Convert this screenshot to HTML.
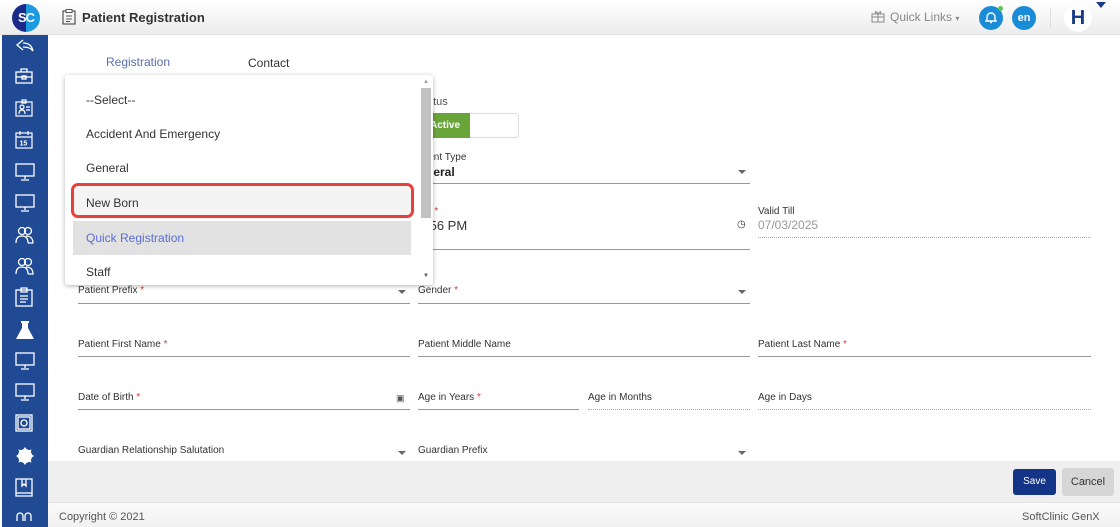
<!DOCTYPE html>
<html><head><meta charset="utf-8"><style>
*{margin:0;padding:0;box-sizing:border-box}
body{width:1120px;height:527px;overflow:hidden;font-family:"Liberation Sans",sans-serif;background:#fff;position:relative;color:#333}
.abs{position:absolute}
.hdr{left:0;top:0;width:1120px;height:35px;background:linear-gradient(#fff,#ececec);border-bottom:1px solid #e2e2e2}
.side{left:2px;top:35px;width:46px;height:492px;background:#214a94}
.side svg{position:absolute;left:13px}
.lbl{font-size:10px;color:#333}
.req{color:#e53935}
.ul{height:1px;background:#999}
.dot{height:0;border-top:1px dotted #aaa}
.dd{left:65px;top:75px;width:368px;height:210px;background:#fff;box-shadow:0 1px 5px rgba(0,0,0,.3);border-radius:3px}
.it{position:absolute;left:21px;font-size:12px;color:#333}
.caret{width:0;height:0;border-left:4px solid transparent;border-right:4px solid transparent;border-top:4px solid #666}
</style></head><body>
<div class="abs hdr"></div>
<div class="abs" style="left:12px;top:4px;width:28px;height:28px;border-radius:50%;background:linear-gradient(90deg,#1a2a8a 50%,#1e9be0 50%);color:#fff;font-weight:bold;font-size:13px;line-height:28px;text-align:center;letter-spacing:-1px">SC</div>
<svg class="abs" style="left:62px;top:9px" width="14" height="16" viewBox="0 0 14 16"><rect x="1" y="2" width="12" height="13" fill="none" stroke="#555" stroke-width="1.2"/><rect x="4" y="0.5" width="6" height="3" fill="#fff" stroke="#555"/><path d="M4 7h6M4 10h6M4 12.5h4" stroke="#555"/></svg>
<div class="abs" style="left:82px;top:10px;font-size:13px;font-weight:bold;color:#333">Patient Registration</div>
<svg class="abs" style="left:871px;top:10px" width="14" height="13" viewBox="0 0 14 13"><rect x="1" y="4" width="12" height="8" fill="none" stroke="#888"/><path d="M1 7h12M7 4v8M7 4C5 0 3 2 5 4M7 4c2-4 4-2 2 0" fill="none" stroke="#888"/></svg>
<div class="abs" style="left:890px;top:10px;font-size:12px;color:#888">Quick Links <span style="font-size:8px">▾</span></div>
<div class="abs" style="left:979px;top:6px;width:24px;height:24px;border-radius:50%;background:#1a8bd6"></div>
<div class="abs" style="left:998px;top:6px;width:5px;height:5px;border-radius:50%;background:#5bc45b"></div>
<svg class="abs" style="left:985px;top:11px" width="12" height="13" viewBox="0 0 12 13"><path d="M2 9V6a4 4 0 0 1 8 0v3l1 1H1z" fill="none" stroke="#fff" stroke-width="1.4"/><path d="M5 11.5h2" stroke="#fff" stroke-width="1.4"/></svg>
<div class="abs" style="left:1012px;top:6px;width:24px;height:24px;border-radius:50%;background:#1a8bd6;color:#fff;font-size:11px;font-weight:bold;line-height:24px;text-align:center">en</div>
<div class="abs" style="left:1050px;top:8px;width:1px;height:20px;background:#ddd"></div>
<div class="abs" style="left:1064px;top:4px;width:28px;height:28px;border-radius:50%;background:#fff;color:#1a3a8a;font-size:20px;font-weight:bold;line-height:28px;text-align:center">H</div>
<div class="abs" style="left:1096px;top:2px;border-left:5px solid transparent;border-right:5px solid transparent;border-top:6px solid #1a3a8a"></div>

<div class="abs side">
<svg style="top:4px" width="20" height="14" viewBox="0 0 20 14" fill="none" stroke="#fff" stroke-width="1.3"><path d="M8 1L2 6l6 5M8 4c6 0 9 3 10 8C16 9 13 8 8 8"/></svg>
<svg style="top:33px" width="18" height="16" viewBox="0 0 18 16" fill="none" stroke="#fff" stroke-width="1.3"><rect x="1" y="4" width="16" height="11"/><path d="M6 4V1h6v3M1 9h16"/><rect x="7" y="8" width="4" height="3"/></svg>
<svg style="top:64px" width="18" height="18" viewBox="0 0 18 18" fill="none" stroke="#fff" stroke-width="1.2"><rect x="1" y="3" width="16" height="14"/><path d="M7 1h4v3H7zM4 15c0-3 1-4 3-4s3 1 3 4M11 8h4M11 11h4"/><circle cx="7" cy="8" r="2"/></svg>
<svg style="top:96px" width="18" height="18" viewBox="0 0 18 18" fill="none" stroke="#fff" stroke-width="1.2"><rect x="1" y="2" width="16" height="15"/><path d="M1 6h16M5 0v4M13 0v4"/><text x="4.5" y="14.5" font-size="7" fill="#fff" stroke="none" font-family="Liberation Sans" font-weight="bold">15</text></svg>
<svg style="top:128px" width="20" height="18" viewBox="0 0 20 18" fill="none" stroke="#fff" stroke-width="1.3"><rect x="1" y="1" width="18" height="12"/><path d="M10 13v3M6 17h8"/></svg>
<svg style="top:159px" width="20" height="18" viewBox="0 0 20 18" fill="none" stroke="#fff" stroke-width="1.3"><rect x="1" y="1" width="18" height="12"/><path d="M10 13v3M6 17h8"/></svg>
<svg style="top:191px" width="20" height="18" viewBox="0 0 20 18" fill="none" stroke="#fff" stroke-width="1.3"><circle cx="7" cy="5" r="3.5"/><circle cx="13" cy="5" r="3.5"/><path d="M1 17c0-5 2-7 6-7s6 2 6 7M11 10c4 0 7 2 7 7H13"/></svg>
<svg style="top:222px" width="20" height="18" viewBox="0 0 20 18" fill="none" stroke="#fff" stroke-width="1.3"><circle cx="7" cy="5" r="3.5"/><circle cx="13" cy="5" r="3.5"/><path d="M1 17c0-5 2-7 6-7s6 2 6 7M11 10c4 0 7 2 7 7H13"/></svg>
<svg style="top:252px" width="18" height="20" viewBox="0 0 18 20" fill="none" stroke="#fff" stroke-width="1.3"><rect x="1" y="3" width="16" height="16"/><path d="M6 1h6v4H6zM5 9h8M5 12h8M5 15h6"/></svg>
<svg style="top:285px" width="20" height="20" viewBox="0 0 20 20"><path d="M6 1h8v2h-1v5l6 11H1L7 8V3H6z" fill="#fff"/></svg>
<svg style="top:317px" width="20" height="18" viewBox="0 0 20 18" fill="none" stroke="#fff" stroke-width="1.3"><rect x="1" y="1" width="18" height="12"/><path d="M10 13v3M6 17h8"/></svg>
<svg style="top:348px" width="20" height="18" viewBox="0 0 20 18" fill="none" stroke="#fff" stroke-width="1.3"><rect x="1" y="1" width="18" height="12"/><path d="M10 13v3M6 17h8"/></svg>
<svg style="top:379px" width="18" height="18" viewBox="0 0 18 18" fill="none" stroke="#fff" stroke-width="1.3"><rect x="1" y="1" width="16" height="16"/><rect x="3" y="3" width="12" height="12"/><circle cx="9" cy="9" r="3"/></svg>
<svg style="top:411px" width="20" height="20" viewBox="0 0 20 20"><circle cx="10" cy="10" r="7" fill="#fff"/><path d="M10 1l2 3h-4zM10 19l2-3h-4zM1 10l3 2v-4zM19 10l-3 2v-4zM3.5 3.5l3.5 1-2.5 2.5zM16.5 16.5l-3.5-1 2.5-2.5zM16.5 3.5l-1 3.5-2.5-2.5zM3.5 16.5l1-3.5 2.5 2.5z" fill="#fff"/></svg>
<svg style="top:443px" width="18" height="20" viewBox="0 0 18 20" fill="none" stroke="#fff" stroke-width="1.3"><rect x="1" y="1" width="16" height="14"/><path d="M1 15v3h16v-3M7 1v7l2-2 2 2V1"/></svg>
<svg style="top:475px" width="18" height="12" viewBox="0 0 18 12" fill="none" stroke="#fff" stroke-width="1.3"><path d="M2 11V6a3 3 0 0 1 6 0v5M10 11V6a3 3 0 0 1 6 0v5"/></svg>
</div>

<div class="abs" style="left:106px;top:55px;font-size:12px;color:#5a6fb0">Registration</div>
<div class="abs" style="left:248px;top:56px;font-size:12px;color:#333">Contact</div>

<div class="abs" style="left:427px;top:96px;font-size:11px;color:#555">atus</div>
<div class="abs" style="left:418px;top:113px;width:101px;height:25px;border:1px solid #ddd;border-radius:3px;background:#fff"></div>
<div class="abs" style="left:418px;top:113px;width:52px;height:25px;background:#6aa53a;color:#fff;font-size:10px;font-weight:bold;line-height:25px;text-align:right;padding-right:10px">Active</div>
<div class="abs lbl" style="left:426px;top:152px">ient Type</div>
<div class="abs" style="left:426px;top:165px;font-size:12px;font-weight:bold;color:#222">neral</div>
<div class="abs caret" style="left:738px;top:170px"></div>
<div class="abs ul" style="left:418px;top:183px;width:332px"></div>
<div class="abs lbl" style="left:426px;top:206px">e <span class="req">*</span></div>
<div class="abs" style="left:426px;top:218px;font-size:13px;color:#333">:56 PM</div>
<div class="abs" style="left:737px;top:219px;font-size:10px;color:#333">◷</div>
<div class="abs ul" style="left:418px;top:249px;width:332px"></div>
<div class="abs lbl" style="left:758px;top:206px">Valid Till</div>
<div class="abs" style="left:758px;top:218px;font-size:12px;color:#999">07/03/2025</div>
<div class="abs dot" style="left:758px;top:237px;width:333px"></div>

<div class="abs lbl" style="left:78px;top:285px">Patient Prefix <span class="req">*</span></div>
<div class="abs caret" style="left:398px;top:290px"></div>
<div class="abs ul" style="left:78px;top:303px;width:332px"></div>
<div class="abs lbl" style="left:418px;top:285px">Gender <span class="req">*</span></div>
<div class="abs caret" style="left:738px;top:290px"></div>
<div class="abs ul" style="left:418px;top:303px;width:332px"></div>

<div class="abs lbl" style="left:78px;top:339px">Patient First Name <span class="req">*</span></div>
<div class="abs ul" style="left:78px;top:356px;width:332px"></div>
<div class="abs lbl" style="left:418px;top:339px">Patient Middle Name</div>
<div class="abs ul" style="left:418px;top:356px;width:332px"></div>
<div class="abs lbl" style="left:758px;top:339px">Patient Last Name <span class="req">*</span></div>
<div class="abs ul" style="left:758px;top:356px;width:333px"></div>

<div class="abs lbl" style="left:78px;top:392px">Date of Birth <span class="req">*</span></div>
<div class="abs" style="left:396px;top:393px;font-size:9px;color:#555">▣</div>
<div class="abs ul" style="left:78px;top:409px;width:332px"></div>
<div class="abs lbl" style="left:418px;top:392px">Age in Years <span class="req">*</span></div>
<div class="abs ul" style="left:418px;top:409px;width:161px"></div>
<div class="abs lbl" style="left:588px;top:392px">Age in Months</div>
<div class="abs dot" style="left:588px;top:409px;width:162px"></div>
<div class="abs lbl" style="left:758px;top:392px">Age in Days</div>
<div class="abs dot" style="left:758px;top:409px;width:333px"></div>

<div class="abs lbl" style="left:78px;top:445px">Guardian Relationship Salutation</div>
<div class="abs caret" style="left:398px;top:451px"></div>
<div class="abs lbl" style="left:418px;top:445px">Guardian Prefix</div>
<div class="abs caret" style="left:738px;top:451px"></div>

<div class="abs" style="left:48px;top:461px;width:1072px;height:41px;background:#efefef"></div>
<div class="abs" style="left:1013px;top:469px;width:43px;height:26px;background:#143488;border-radius:3px;color:#fff;font-size:10px;line-height:26px;text-align:center">Save</div>
<div class="abs" style="left:1062px;top:468px;width:52px;height:28px;background:#d6d6d6;border-radius:3px;color:#333;font-size:11px;line-height:28px;text-align:center">Cancel</div>
<div class="abs" style="left:48px;top:502px;width:1072px;height:25px;background:linear-gradient(#fafafa,#f1f1f1);border-top:1px solid #e4e4e4"></div>
<div class="abs" style="left:59px;top:511px;font-size:11px;color:#555">Copyright © 2021</div>
<div class="abs" style="left:1022px;top:511px;font-size:11px;color:#555">SoftClinic GenX</div>

<div class="abs dd">
<div class="it" style="top:18px">--Select--</div>
<div class="it" style="top:52px">Accident And Emergency</div>
<div class="it" style="top:86px">General</div>
<div class="abs" style="left:8px;top:146px;width:338px;height:34px;background:#e2e2e2"></div>
<div class="abs" style="left:8px;top:110px;width:338px;height:34px;background:#f4f4f4"></div>
<div class="abs" style="left:6px;top:108px;width:343px;height:35px;border:3px solid #e8403a;border-radius:7px"></div>
<div class="it" style="top:121px">New Born</div>
<div class="it" style="top:156px;color:#5a6fd0">Quick Registration</div>
<div class="it" style="top:190px">Staff</div>
<div class="abs" style="left:356px;top:13px;width:10px;height:130px;background:#c2c2c2"></div>
<div class="abs" style="left:358px;top:4px;font-size:6px;color:#999">▲</div>
<div class="abs" style="left:358px;top:198px;font-size:6px;color:#555">▼</div>
</div>
</body></html>
